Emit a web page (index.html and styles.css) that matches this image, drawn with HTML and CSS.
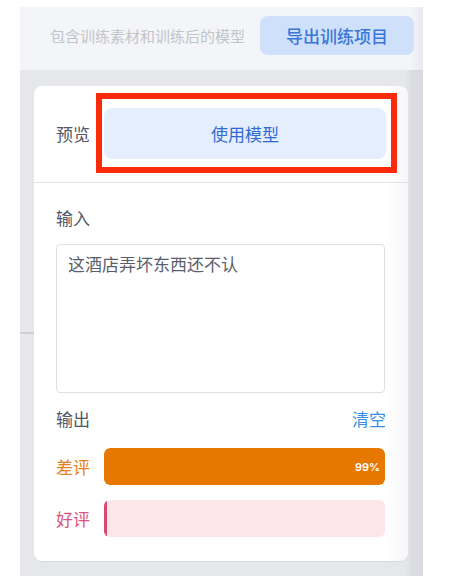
FILE: index.html
```html
<!DOCTYPE html>
<html lang="zh-CN">
<head>
<meta charset="utf-8">
<title>预览</title>
<link rel="stylesheet" href="styles.css">
</head>
<body>
<div class="panel">
  <div class="header">
    <span class="hint">包含训练素材和训练后的模型</span>
    <button class="export">导出训练项目</button>
  </div>
  <div class="card">
    <div class="section top">
      <span class="label">预览</span>
      <button class="use">使用模型</button>
    </div>
    <div class="section body">
      <div class="label">输入</div>
      <div class="input">这酒店弄坏东西还不认</div>
      <div class="out-head">
        <span class="label">输出</span>
        <span class="clear">清空</span>
      </div>
      <div class="result bad">
        <span class="rlabel">差评</span>
        <div class="track"><div class="fill" style="width:99%"><span class="pct">99%</span></div></div>
      </div>
      <div class="result good">
        <span class="rlabel">好评</span>
        <div class="track"><div class="fill" style="width:1%"></div></div>
      </div>
    </div>
    <div class="highlight"></div>
  </div>
</div>
</body>
</html>
```
FILE: styles.css
```css
html, body {
  margin: 0;
  padding: 0;
  background: #ffffff;
  font-family: "Noto Sans CJK SC", "Noto Sans", sans-serif;
  overflow: hidden;
}
.panel {
  position: relative;
  margin: 7px 0 0 20px;
  width: 403px;
  height: 569px;
  background: linear-gradient(to right, #e6e7eb 0, #e6e7eb 385px, #dcdde1 392px, #d9dadf 403px);
  display: flex;
  flex-direction: column;
}
.panel::before {
  content: "";
  position: absolute;
  left: 0;
  top: 325px;
  width: 14px;
  height: 2px;
  background: #cfd0d5;
}
.header {
  height: 63px;
  background: linear-gradient(to right, #f4f5f8 0, #f4f5f8 390px, #e9eaee 403px);
  display: flex;
  align-items: center;
  justify-content: flex-end;
  gap: 15px;
  padding: 0 9px 6px 0;
  box-sizing: border-box;
}
.hint {
  font-size: 15px;
  color: #c2c4ca;
  white-space: nowrap;
}
.export {
  width: 154px;
  height: 39px;
  border: none;
  border-radius: 8px;
  background: #cfe0fa;
  color: #3a76d8;
  font-family: inherit;
  font-size: 17px;
  font-weight: 500;
  padding: 0;
}
.card {
  position: relative;
  margin: 16px 15px 0 14px;
  background: linear-gradient(to right, #ffffff 0, #ffffff 350px, #f7f7f9 374px);
  border-radius: 8px;
  box-shadow: 0 1px 0 #d9dadf;
  height: 475px;
}
.section.top {
  display: flex;
  align-items: center;
  padding: 22px 22px 23px 22px;
  border-bottom: 1px solid #e3e4e8;
}
.label {
  font-size: 17px;
  color: #525766;
  line-height: 24px;
}
.section.top .label {
  width: 48px;
  flex: none;
}
.use {
  flex: 1;
  height: 51px;
  border: none;
  border-radius: 8px;
  background: #e4eefd;
  color: #2f6bd2;
  font-family: inherit;
  font-size: 17px;
  padding: 0;
}
.section.body {
  padding: 23px 23px 0 22px;
  display: flex;
  flex-direction: column;
}
.input {
  margin-top: 14px;
  height: 149px;
  box-sizing: border-box;
  border: 1px solid #dcdfe5;
  border-radius: 4px;
  padding: 6px 11px;
  font-size: 17px;
  line-height: 26px;
  color: #5a5e6c;
}
.out-head {
  margin-top: 14px;
  display: flex;
  justify-content: space-between;
  align-items: center;
}
.clear {
  font-size: 17px;
  color: #3a8fe8;
  line-height: 24px;
  margin-right: -1px;
}
.result {
  display: flex;
  align-items: center;
  margin-top: 17px;
}
.result.good {
  margin-top: 15px;
}
.rlabel {
  width: 48px;
  flex: none;
  font-size: 17px;
}
.bad .rlabel { color: #e8801e; }
.good .rlabel { color: #d8557e; }
.track {
  flex: 1;
  height: 37px;
  border-radius: 6px;
  overflow: hidden;
  display: flex;
}
.bad .track { background: #fbe3cc; }
.good .track { background: #fde6ea; }
.fill {
  height: 100%;
  display: flex;
  align-items: center;
  justify-content: flex-end;
  border-radius: 6px;
}
.bad .fill { background: #e67800; min-width: 100%; }
.good .fill { background: #d9486f; border-radius: 2px; min-width: 3px; max-width: 3px; }
.pct {
  color: #ffffff;
  font-family: "Inter", "Liberation Sans", sans-serif;
  font-size: 11px;
  font-weight: 600;
  padding-right: 5px;
}
.highlight {
  position: absolute;
  left: 62px;
  top: 7px;
  width: 301px;
  height: 80px;
  box-sizing: border-box;
  border: 6px solid #fb2a0a;
  pointer-events: none;
}
```
